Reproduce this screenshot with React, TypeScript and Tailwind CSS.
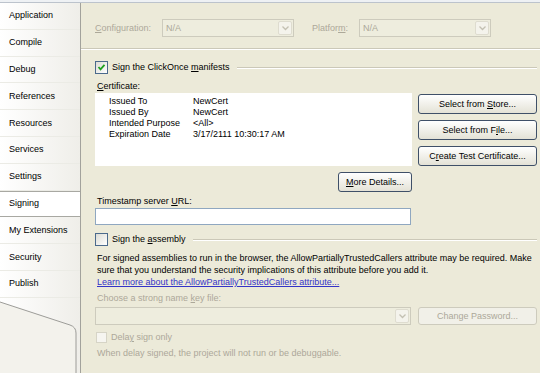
import type { ReactNode } from "react";

const NAV_ITEMS = [
  "Application",
  "Compile",
  "Debug",
  "References",
  "Resources",
  "Services",
  "Settings",
  "Signing",
  "My Extensions",
  "Security",
  "Publish",
];

const CERT_ROWS = [
  ["Issued To", "NewCert"],
  ["Issued By", "NewCert"],
  ["Intended Purpose", "<All>"],
  ["Expiration Date", "3/17/2111 10:30:17 AM"],
];

function Etched({ className = "" }: { className?: string }) {
  return (
    <div
      className={`h-0 border-t border-b border-t-[#cbc8b8] border-b-white ${className}`}
    />
  );
}

function Chevron({ disabled }: { disabled?: boolean }) {
  return (
    <svg width="7" height="5" viewBox="0 0 7 5">
      <polyline
        points="0.5,0.5 3.5,3.5 6.5,0.5"
        fill="none"
        stroke={disabled ? "#c3c0b2" : "#4d6185"}
        strokeWidth="1.3"
      />
    </svg>
  );
}

function Combo({ value, className = "" }: { value?: string; className?: string }) {
  return (
    <div
      className={`flex h-[18px] items-center border border-[#cdcbbd] bg-[#eeedde] ${className}`}
    >
      <span className="flex-1 pl-[3px] text-[#aca899]">{value}</span>
      <div className="mr-px flex h-[14px] w-[14px] items-center justify-center rounded-[2px] border border-[#dedccf] bg-[#f4f3ec]">
        <Chevron disabled />
      </div>
    </div>
  );
}

function Button({
  children,
  className = "",
  disabled,
}: {
  children: ReactNode;
  className?: string;
  disabled?: boolean;
}) {
  return (
    <div
      className={
        disabled
          ? `flex h-[18px] items-center justify-center rounded-[3px] border border-[#cdcbbd] bg-[#f1f0e8] text-[#aca899] ${className}`
          : `flex h-[20px] items-center justify-center rounded-[3px] border border-[#3f5068] bg-linear-to-b from-white to-[#e4e2d6] text-black ${className}`
      }
    >
      <span>{children}</span>
    </div>
  );
}

function Checkbox({ checked, disabled }: { checked?: boolean; disabled?: boolean }) {
  if (disabled) {
    return <div className="h-[11px] w-[11px] border border-[#d6d4c6] bg-[#f6f5f0]" />;
  }
  return (
    <div className="flex h-[13px] w-[13px] items-center justify-center border border-[#4b6a8c] bg-linear-to-br from-[#dcdcd5] to-white">
      {checked ? (
        <svg width="9" height="9" viewBox="0 0 9 9">
          <polyline
            points="1.5,4 3.5,6.3 7.5,1.8"
            fill="none"
            stroke="#21a121"
            strokeWidth="1.8"
          />
        </svg>
      ) : null}
    </div>
  );
}

function U({ children }: { children: ReactNode }) {
  return <span className="underline underline-offset-1">{children}</span>;
}

export default function App() {
  return (
    <div className="flex h-[373px] w-[540px] flex-col overflow-hidden bg-[#ecead9] font-['Liberation_Sans',Arial,sans-serif] text-[9px] leading-[11px] text-black">
      <div className="h-[3px] bg-[#eef1f4] border-b border-[#bcc3cc]" />
      <div className="flex flex-1">
        <nav className="flex w-[81px] flex-col border-r border-[#a2a29c] bg-linear-to-r from-white to-[#efeee9]">
          {NAV_ITEMS.map((item) => (
            <div
              key={item}
              className={
                item === "Signing"
                  ? "flex h-[26.8px] items-center border-y border-[#a8a8a2] bg-white pl-[9px]"
                  : "flex h-[26.8px] items-center border-b border-[#ebebe5] pl-[9px]"
              }
            >
              {item}
            </div>
          ))}
          <div className="relative flex-1">
            <svg className="absolute inset-0" width="80" height="80" viewBox="0 0 80 80">
              <path d="M0 4 L70 27 Q76 29 76 35 L76 80 L0 80 Z" fill="#f3f2ec" />
              <path
                d="M0 4 L70 27 Q76 29 76 35 L76 80"
                fill="none"
                stroke="#9c9c98"
                strokeWidth="1"
              />
            </svg>
          </div>
        </nav>

        <main className="flex flex-1 flex-col">
          <div className="mt-[16px] flex items-center pl-[14px] text-[#aca899]">
            <span className="w-[67px]">
              <U>C</U>onfiguration:
            </span>
            <Combo value="N/A" className="w-[132px]" />
            <span className="ml-[18px] w-[47px]">
              Platfor<U>m</U>:
            </span>
            <Combo value="N/A" className="w-[132px]" />
          </div>

          <Etched className="mt-[11px]" />

          <div className="flex flex-col pl-[14px] pr-[3px]">
            <div className="mt-[11px] flex h-[13px] items-center">
              <Checkbox checked />
              <span className="ml-[4px]">
                Sign the ClickOnce <U>m</U>anifests
              </span>
              <Etched className="ml-[7px] flex-1" />
            </div>

            <div className="mt-[7px] h-[11px] pl-[2px]">
              <U>C</U>ertificate:
            </div>

            <div className="mt-[1px] flex gap-[6px]">
              <div className="flex flex-col">
                <div className="h-[73px] w-[317px] bg-white pt-[3px] pl-[14px]">
                  {CERT_ROWS.map(([label, value]) => (
                    <div key={label} className="flex h-[11px]">
                      <span className="w-[84px]">{label}</span>
                      <span>{value}</span>
                    </div>
                  ))}
                </div>
                <div className="mt-[6px] flex justify-end">
                  <Button className="w-[74px]">
                    <U>M</U>ore Details...
                  </Button>
                </div>
              </div>
              <div className="flex flex-1 flex-col gap-[6px] pt-px">
                <Button>
                  Select from <U>S</U>tore...
                </Button>
                <Button>
                  Select from F<U>i</U>le...
                </Button>
                <Button>
                  C<U>r</U>eate Test Certificate...
                </Button>
              </div>
            </div>

            <div className="mt-[4px] h-[11px] pl-[2px]">
              Timestamp server <U>U</U>RL:
            </div>
            <div className="mt-[1px] h-[17px] w-[316px] border border-[#8fa7c0] bg-white" />

            <div className="mt-[8px] flex h-[13px] items-center">
              <Checkbox />
              <span className="ml-[4px]">
                Sign the <U>a</U>ssembly
              </span>
              <Etched className="ml-[7px] flex-1" />
            </div>

            <div className="mt-[6px] pl-[2px] leading-[12px]">
              <p>
                For signed assemblies to run in the browser, the AllowPartiallyTrustedCallers
                attribute may be required. Make
                <br />
                sure that you understand the security implications of this attribute before you add
                it.
              </p>
              <p className="text-[#3434c8] underline underline-offset-1">
                Learn more about the AllowPartiallyTrustedCallers attribute...
              </p>
            </div>

            <div className="mt-[5px] h-[11px] pl-[2px] text-[#aca899]">
              Choose a strong name <U>k</U>ey file:
            </div>

            <div className="mt-[3px] flex gap-[7px]">
              <Combo className="w-[316px]" />
              <Button disabled className="flex-1">
                Change Password...
              </Button>
            </div>

            <div className="mt-[7px] flex h-[11px] items-center pl-px text-[#aca899]">
              <Checkbox disabled />
              <span className="ml-[4px]">
                Dela<U>y</U> sign only
              </span>
            </div>

            <div className="mt-[5px] h-[11px] pl-[2px] text-[#aca899]">
              When delay signed, the project will not run or be debuggable.
            </div>
          </div>
        </main>
      </div>
    </div>
  );
}
